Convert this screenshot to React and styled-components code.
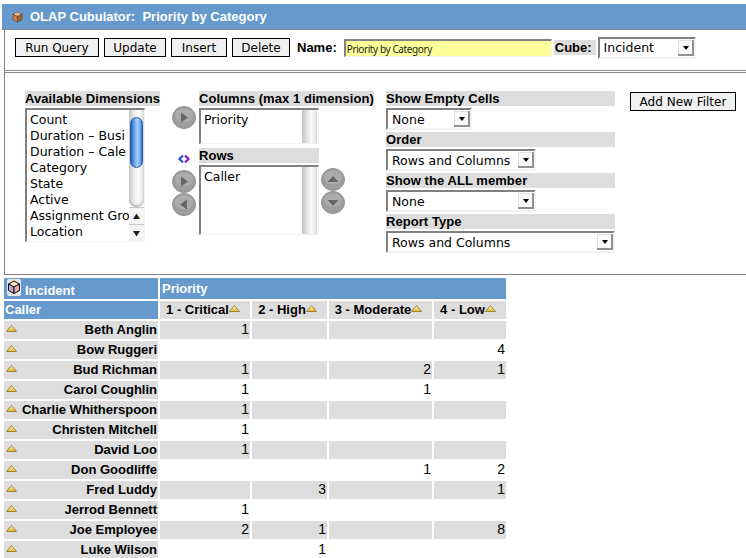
import React from "react";
import styled, { createGlobalStyle } from "styled-components";

const dimensions = [
    "Count",
    "Duration – Busi",
    "Duration – Cale",
    "Category",
    "State",
    "Active",
    "Assignment Gro",
    "Location",
];

const columns = [
    { label: "1 - Critical" },
    { label: "2 - High" },
    { label: "3 - Moderate" },
    { label: "4 - Low" },
];

const rows = [
    { name: "Beth Anglin", values: [1, "", "", ""] },
    { name: "Bow Ruggeri", values: ["", "", "", 4] },
    { name: "Bud Richman", values: [1, "", 2, 1] },
    { name: "Carol Coughlin", values: [1, "", 1, ""] },
    { name: "Charlie Whitherspoon", values: [1, "", "", ""] },
    { name: "Christen Mitchell", values: [1, "", "", ""] },
    { name: "David Loo", values: [1, "", "", ""] },
    { name: "Don Goodliffe", values: ["", "", 1, 2] },
    { name: "Fred Luddy", values: ["", 3, "", 1] },
    { name: "Jerrod Bennett", values: [1, "", "", ""] },
    { name: "Joe Employee", values: [2, 1, "", 8] },
    { name: "Luke Wilson", values: ["", 1, "", ""] },
];

const GlobalStyle = createGlobalStyle`
    html, body {
        margin: 0;
        padding: 0;
        background: #fff;
        overflow: hidden;
    }
    body {
        padding-top: 4px;
        font-family: "Liberation Sans", Arial, sans-serif;
    }
`;

const Header = styled.div`
    display: flex;
    align-items: center;
    gap: 7px;
    height: 25px;
    margin-left: 2px;
    padding-left: 10px;
    background: #6699cc;
    border-bottom: 1px solid #888;
    color: #fff;
    font-size: 13px;
    font-weight: bold;
    white-space: pre;
`;

const Panel = styled.div`
    margin-left: 4px;
    border-left: 1px solid #808080;
`;

const Toolbar = styled.div`
    display: flex;
    align-items: center;
    height: 43px;
    padding: 0 0 5px 10px;
    box-sizing: border-box;
    border-bottom: 3px double #888;
`;

const Button = styled.button`
    width: ${(props) => props.$width}px;
    height: 19px;
    margin-right: ${(props) => props.$gap || 0}px;
    padding: 0;
    border: 1px solid #000;
    outline: 0.5px solid #000;
    outline-offset: -1px;
    background: #f0f0f0;
    color: #000;
    font-family: "DejaVu Sans", sans-serif;
    font-size: 12px;
`;

const FieldLabel = styled.span`
    font-size: 13px;
    font-weight: bold;
    margin-left: ${(props) => props.$left || 0}px;
    margin-right: ${(props) => props.$right || 0}px;
    padding: ${(props) => (props.$shaded ? "0 4px 0 1px" : 0)};
    background: ${(props) => (props.$shaded ? "#dddddd" : "transparent")};
`;

const NameInput = styled.input`
    width: 208px;
    height: 18px;
    box-sizing: border-box;
    padding: 1px 0 0 1px;
    border-style: solid;
    border-width: 2px 1px 1px 2px;
    border-color: #808080 #f4f4f4 #f4f4f4 #808080;
    background: #ffff99;
    color: #222;
    font-family: "Noto Sans", sans-serif;
    font-size: 10px;
    letter-spacing: -0.4px;
    outline: none;
`;

const SelectWrap = styled.div`
    position: relative;
    flex: none;
    width: ${(props) => props.$width}px;
    height: 22px;
    box-sizing: border-box;
    border-style: solid;
    border-width: 2px;
    border-color: #808080 #f2f2f2 #f2f2f2 #808080;

    &::before {
        content: "";
        position: absolute;
        top: 1px;
        right: 0;
        width: 14px;
        height: 14px;
        background: #fafafa;
        border-right: 2px solid #909090;
        border-bottom: 2px solid #909090;
        box-shadow: inset 1px 1px 0 #e0e0e0;
    }

    &::after {
        content: "";
        position: absolute;
        top: 7px;
        right: 5px;
        border-style: solid;
        border-width: 4px 3.5px 0 3.5px;
        border-color: #000 transparent transparent transparent;
    }
`;

const Select = styled.select`
    display: block;
    width: 100%;
    height: 100%;
    padding: 0 0 0 4px;
    border: 0;
    outline: none;
    appearance: none;
    background: #fff;
    color: #000;
    font-family: "DejaVu Sans", sans-serif;
    font-size: 12.5px;
`;

const Config = styled.div`
    display: flex;
    align-items: flex-start;
    height: 202px;
    box-sizing: border-box;
    padding: 18px 0 0 20px;
    border-bottom: 1px solid #808080;
`;

const SectionLabel = styled.div`
    height: 15px;
    line-height: 15px;
    background: #dddddd;
    color: #000;
    font-size: 13px;
    font-weight: bold;
    letter-spacing: 0.06px;
    white-space: nowrap;
    width: ${(props) => (props.$fit ? "max-content" : "auto")};
`;

const DimensionColumn = styled.div`
    flex: none;
    width: 135px;
`;

const ListBox = styled.div`
    display: flex;
    width: ${(props) => props.$width}px;
    height: ${(props) => props.$height}px;
    margin-top: 2px;
    box-sizing: border-box;
    border-style: solid;
    border-width: 2px 1px 1px 2px;
    border-color: #808080 #f2f2f2 #f2f2f2 #808080;
`;

const ListItems = styled.div`
    flex: 1;
    min-width: 0;
    overflow: hidden;
    padding: 2px 0 0 3px;
    font-family: "DejaVu Sans", sans-serif;
    font-size: 12.5px;
    line-height: 16px;
    white-space: nowrap;
`;

const PlainScrollbar = styled.div`
    flex: none;
    width: 15px;
    margin-right: 1px;
    background: linear-gradient(90deg, #c4c4c4, #ececec 45%, #fafafa 65%, #dedede);
`;

const Scrollbar = styled.div`
    flex: none;
    display: flex;
    flex-direction: column;
    width: 15px;
`;

const Track = styled.div`
    flex: 1;
    padding: 7px 1px 0;
    background: linear-gradient(90deg, #c8c8c8, #f6f6f6 45%, #fdfdfd 65%, #e0e0e0);
    border-radius: 0 0 7px 7px;
    box-shadow: inset 0 -2px 2px #bbb;
`;

const Thumb = styled.div`
    height: 51px;
    border-radius: 7px;
    background: linear-gradient(90deg, #1f5fb8, #5b9be8 25%, #a8d0f8 60%, #6aa6ee 85%, #2a6cc4);
    border: 1px solid #2c5f9f;
    box-sizing: border-box;
`;

const ScrollArrow = styled.div`
    display: flex;
    align-items: center;
    justify-content: center;
    height: 17px;
    background: #f4f4f4;
    border-top: 1px solid #c8c8c8;
    box-sizing: border-box;
`;

const ArrowColumn = styled.div`
    flex: none;
    display: flex;
    flex-direction: column;
    align-items: center;
    width: 24px;
    margin-left: 12px;
    padding-top: 15px;
`;

const RoundWrap = styled.svg`
    display: block;
    width: 24px;
    height: 23px;
`;

const SwapIcon = styled.svg`
    display: block;
    width: 12px;
    height: 10px;
    margin: 25px 0 6px;
`;

const MiddleColumn = styled.div`
    flex: none;
    width: 120px;
    margin-left: 3px;
`;

const RowsLabel = styled(SectionLabel)`
    margin-top: 4px;
`;

const OrderColumn = styled.div`
    flex: none;
    width: 24px;
    margin-left: 2px;
    padding-top: 77px;
`;

const FilterColumn = styled.div`
    flex: none;
    display: flex;
    flex-direction: column;
    width: 229px;
    margin-left: 41px;
`;

const FilterSelect = styled(SelectWrap)`
    margin: 2px 0 2px;
`;

const AddFilter = styled(Button)`
    margin: 1px 0 0 15px;
`;

const Table = styled.table`
    table-layout: fixed;
    width: 506px;
    margin: 1px 0 0 2px;
    border-collapse: separate;
    border-spacing: 2px;
    font-size: 13px;
`;

const BlueCell = styled.th`
    padding: ${(props) => (props.$pad ? props.$pad : "0 0 1px 1px")};
    background: #6699cc;
    color: #fff;
    font-weight: bold;
    text-align: left;
    height: ${(props) => props.$height}px;
`;

const CubeTitle = styled.div`
    display: flex;
    align-items: flex-start;
    gap: 4px;
    padding: 1px 0 0 3px;
    box-sizing: border-box;
    height: 21px;
    line-height: 14px;
`;

const CubeTitleText = styled.span`
    margin-top: 5px;
`;

const ColumnHead = styled.th`
    padding: 0 4px 1px 0;
    height: 17px;
    background: #dddddd;
    color: #000;
    font-weight: bold;
    text-align: center;
    white-space: nowrap;
`;

const RowHead = styled.th`
    padding: 0 1px 1px 2px;
    height: 17px;
    background: #dddddd;
    color: #000;
    font-weight: bold;
`;

const RowHeadInner = styled.div`
    display: flex;
    justify-content: space-between;
    align-items: center;
    white-space: nowrap;
`;

const Cell = styled.td`
    padding: 0 1px 1px 0;
    height: 17px;
    background: ${(props) => (props.$shaded ? "#dddddd" : "#fff")};
    color: #000;
    font-size: 14px;
    text-align: right;
    line-height: 17px;
`;

const SortIconSvg = styled.svg`
    width: 11px;
    height: 7px;
    vertical-align: ${(props) => (props.$inline ? "2px" : "baseline")};
    margin-bottom: ${(props) => (props.$inline ? 0 : "3px")};
    flex: none;
`;

const SortIcon = ({ inline }) => (
    <SortIconSvg $inline={inline} viewBox="0 0 11 7">
        <defs>
            <linearGradient id="sortFill" x1="0" y1="0" x2="0" y2="1">
                <stop offset="0" stopColor="#fff6c0" />
                <stop offset="1" stopColor="#e8b820" />
            </linearGradient>
        </defs>
        <polygon points="5.5,0.5 10.5,6.5 0.5,6.5" fill="url(#sortFill)" stroke="#8a7030" strokeWidth="0.8" />
    </SortIconSvg>
);

const RoundButton = ({ direction }) => {
    const shapes = {
        right: "9,6.5 16,11.5 9,16.5",
        left: "15,6.5 8,11.5 15,16.5",
        up: "6.5,14 12,8 17.5,14",
        down: "6.5,9 12,15 17.5,9",
    };
    return (
        <RoundWrap viewBox="0 0 24 23">
            <ellipse cx="12" cy="11.5" rx="11.5" ry="11" fill="#9e9e9e" stroke="#909090" strokeWidth="1" />
            <ellipse cx="12" cy="9.5" rx="9" ry="7" fill="#acacac" />
            <polygon points={shapes[direction]} fill="#666" />
        </RoundWrap>
    );
};

const ArrowGlyph = ({ down }) => (
    <svg width="9" height="7" viewBox="0 0 9 7">
        <polygon points={down ? "1,1 8,1 4.5,6.5" : "4.5,0.5 8,6 1,6"} fill="#222" />
    </svg>
);

const BrownCube = () => (
    <svg width="11" height="12" viewBox="0 0 12 12">
        <polygon points="6,0.5 11,3 6,5.5 1,3" fill="#e8b888" stroke="#5a3a20" strokeWidth="0.6" />
        <polygon points="1,3 6,5.5 6,11.5 1,9" fill="#c08050" stroke="#5a3a20" strokeWidth="0.6" />
        <polygon points="11,3 6,5.5 6,11.5 11,9" fill="#a06030" stroke="#5a3a20" strokeWidth="0.6" />
    </svg>
);

const ColorCube = () => (
    <svg width="14" height="17" viewBox="0 0 14 17">
        <rect x="0" y="0" width="14" height="17" rx="2" fill="#e4e4e4" />
        <polygon points="7,2 12.5,5 7,8 1.5,5" fill="#f0e8c0" stroke="#111" strokeWidth="1" />
        <polygon points="1.5,5 7,8 7,14.5 1.5,11.5" fill="#b8a8e8" stroke="#111" strokeWidth="1" />
        <polygon points="12.5,5 7,8 7,14.5 12.5,11.5" fill="#f0a8b0" stroke="#111" strokeWidth="1" />
    </svg>
);

const Dropdown = ({ width, value, options, as }) => (
    <SelectWrap as={as} $width={width}>
        <Select defaultValue={value}>
            {options.map((option) => (
                <option key={option}>{option}</option>
            ))}
        </Select>
    </SelectWrap>
);

const App = () => (
    <>
        <GlobalStyle />
        <Header>
            <BrownCube />
            <span>OLAP Cubulator:  Priority by Category</span>
        </Header>
        <Panel>
            <Toolbar>
                <Button $width={84} $gap={5}>Run Query</Button>
                <Button $width={62} $gap={5}>Update</Button>
                <Button $width={56} $gap={5}>Insert</Button>
                <Button $width={58}>Delete</Button>
                <FieldLabel $left={7} $right={7}>Name:</FieldLabel>
                <NameInput defaultValue="Priority by Category" />
                <FieldLabel $shaded $left={2} $right={2}>Cube:</FieldLabel>
                <Dropdown width={98} value="Incident" options={["Incident"]} />
            </Toolbar>
            <Config>
                <DimensionColumn>
                    <SectionLabel>Available Dimensions</SectionLabel>
                    <ListBox $width={120} $height={134}>
                        <ListItems>
                            {dimensions.map((dimension) => (
                                <div key={dimension}>{dimension}</div>
                            ))}
                        </ListItems>
                        <Scrollbar>
                            <Track>
                                <Thumb />
                            </Track>
                            <ScrollArrow>
                                <ArrowGlyph />
                            </ScrollArrow>
                            <ScrollArrow>
                                <ArrowGlyph down />
                            </ScrollArrow>
                        </Scrollbar>
                    </ListBox>
                </DimensionColumn>
                <ArrowColumn>
                    <RoundButton direction="right" />
                    <SwapIcon viewBox="0 0 12 10">
                        <polyline points="5,1.5 1.5,5 5,8.5" fill="none" stroke="#2050d0" strokeWidth="2.2" />
                        <polyline points="7,1.5 10.5,5 7,8.5" fill="none" stroke="#8020b0" strokeWidth="2.2" />
                    </SwapIcon>
                    <RoundButton direction="right" />
                    <RoundButton direction="left" />
                </ArrowColumn>
                <MiddleColumn>
                    <SectionLabel $fit>Columns (max 1 dimension)</SectionLabel>
                    <ListBox $width={120} $height={36}>
                        <ListItems>Priority</ListItems>
                        <PlainScrollbar />
                    </ListBox>
                    <RowsLabel>Rows</RowsLabel>
                    <ListBox $width={120} $height={70}>
                        <ListItems>Caller</ListItems>
                        <PlainScrollbar />
                    </ListBox>
                </MiddleColumn>
                <OrderColumn>
                    <RoundButton direction="up" />
                    <RoundButton direction="down" />
                </OrderColumn>
                <FilterColumn>
                    <SectionLabel>Show Empty Cells</SectionLabel>
                    <Dropdown as={FilterSelect} width={86} value="None" options={["None"]} />
                    <SectionLabel>Order</SectionLabel>
                    <Dropdown as={FilterSelect} width={150} value="Rows and Columns" options={["Rows and Columns"]} />
                    <SectionLabel>Show the ALL member</SectionLabel>
                    <Dropdown as={FilterSelect} width={150} value="None" options={["None"]} />
                    <SectionLabel>Report Type</SectionLabel>
                    <Dropdown as={FilterSelect} width={229} value="Rows and Columns" options={["Rows and Columns"]} />
                </FilterColumn>
                <AddFilter $width={106}>Add New Filter</AddFilter>
            </Config>
        </Panel>
        <Table>
            <colgroup>
                <col width="154" />
                <col width="90" />
                <col width="75" />
                <col width="103" />
                <col width="72" />
            </colgroup>
            <thead>
                <tr>
                    <BlueCell $height={21} $pad="0">
                        <CubeTitle>
                            <ColorCube />
                            <CubeTitleText>Incident</CubeTitleText>
                        </CubeTitle>
                    </BlueCell>
                    <BlueCell $height={21} colSpan={4} $pad="0 0 0 2px">Priority</BlueCell>
                </tr>
                <tr>
                    <BlueCell $height={17}>Caller</BlueCell>
                    {columns.map((column) => (
                        <ColumnHead key={column.label}>
                            {column.label}
                            <SortIcon inline />
                        </ColumnHead>
                    ))}
                </tr>
            </thead>
            <tbody>
                {rows.map((row, index) => (
                    <tr key={row.name}>
                        <RowHead>
                            <RowHeadInner>
                                <SortIcon />
                                <span>{row.name}</span>
                            </RowHeadInner>
                        </RowHead>
                        {row.values.map((value, col) => (
                            <Cell key={col} $shaded={index % 2 === 0}>{value}</Cell>
                        ))}
                    </tr>
                ))}
            </tbody>
        </Table>
    </>
);

export default App;
